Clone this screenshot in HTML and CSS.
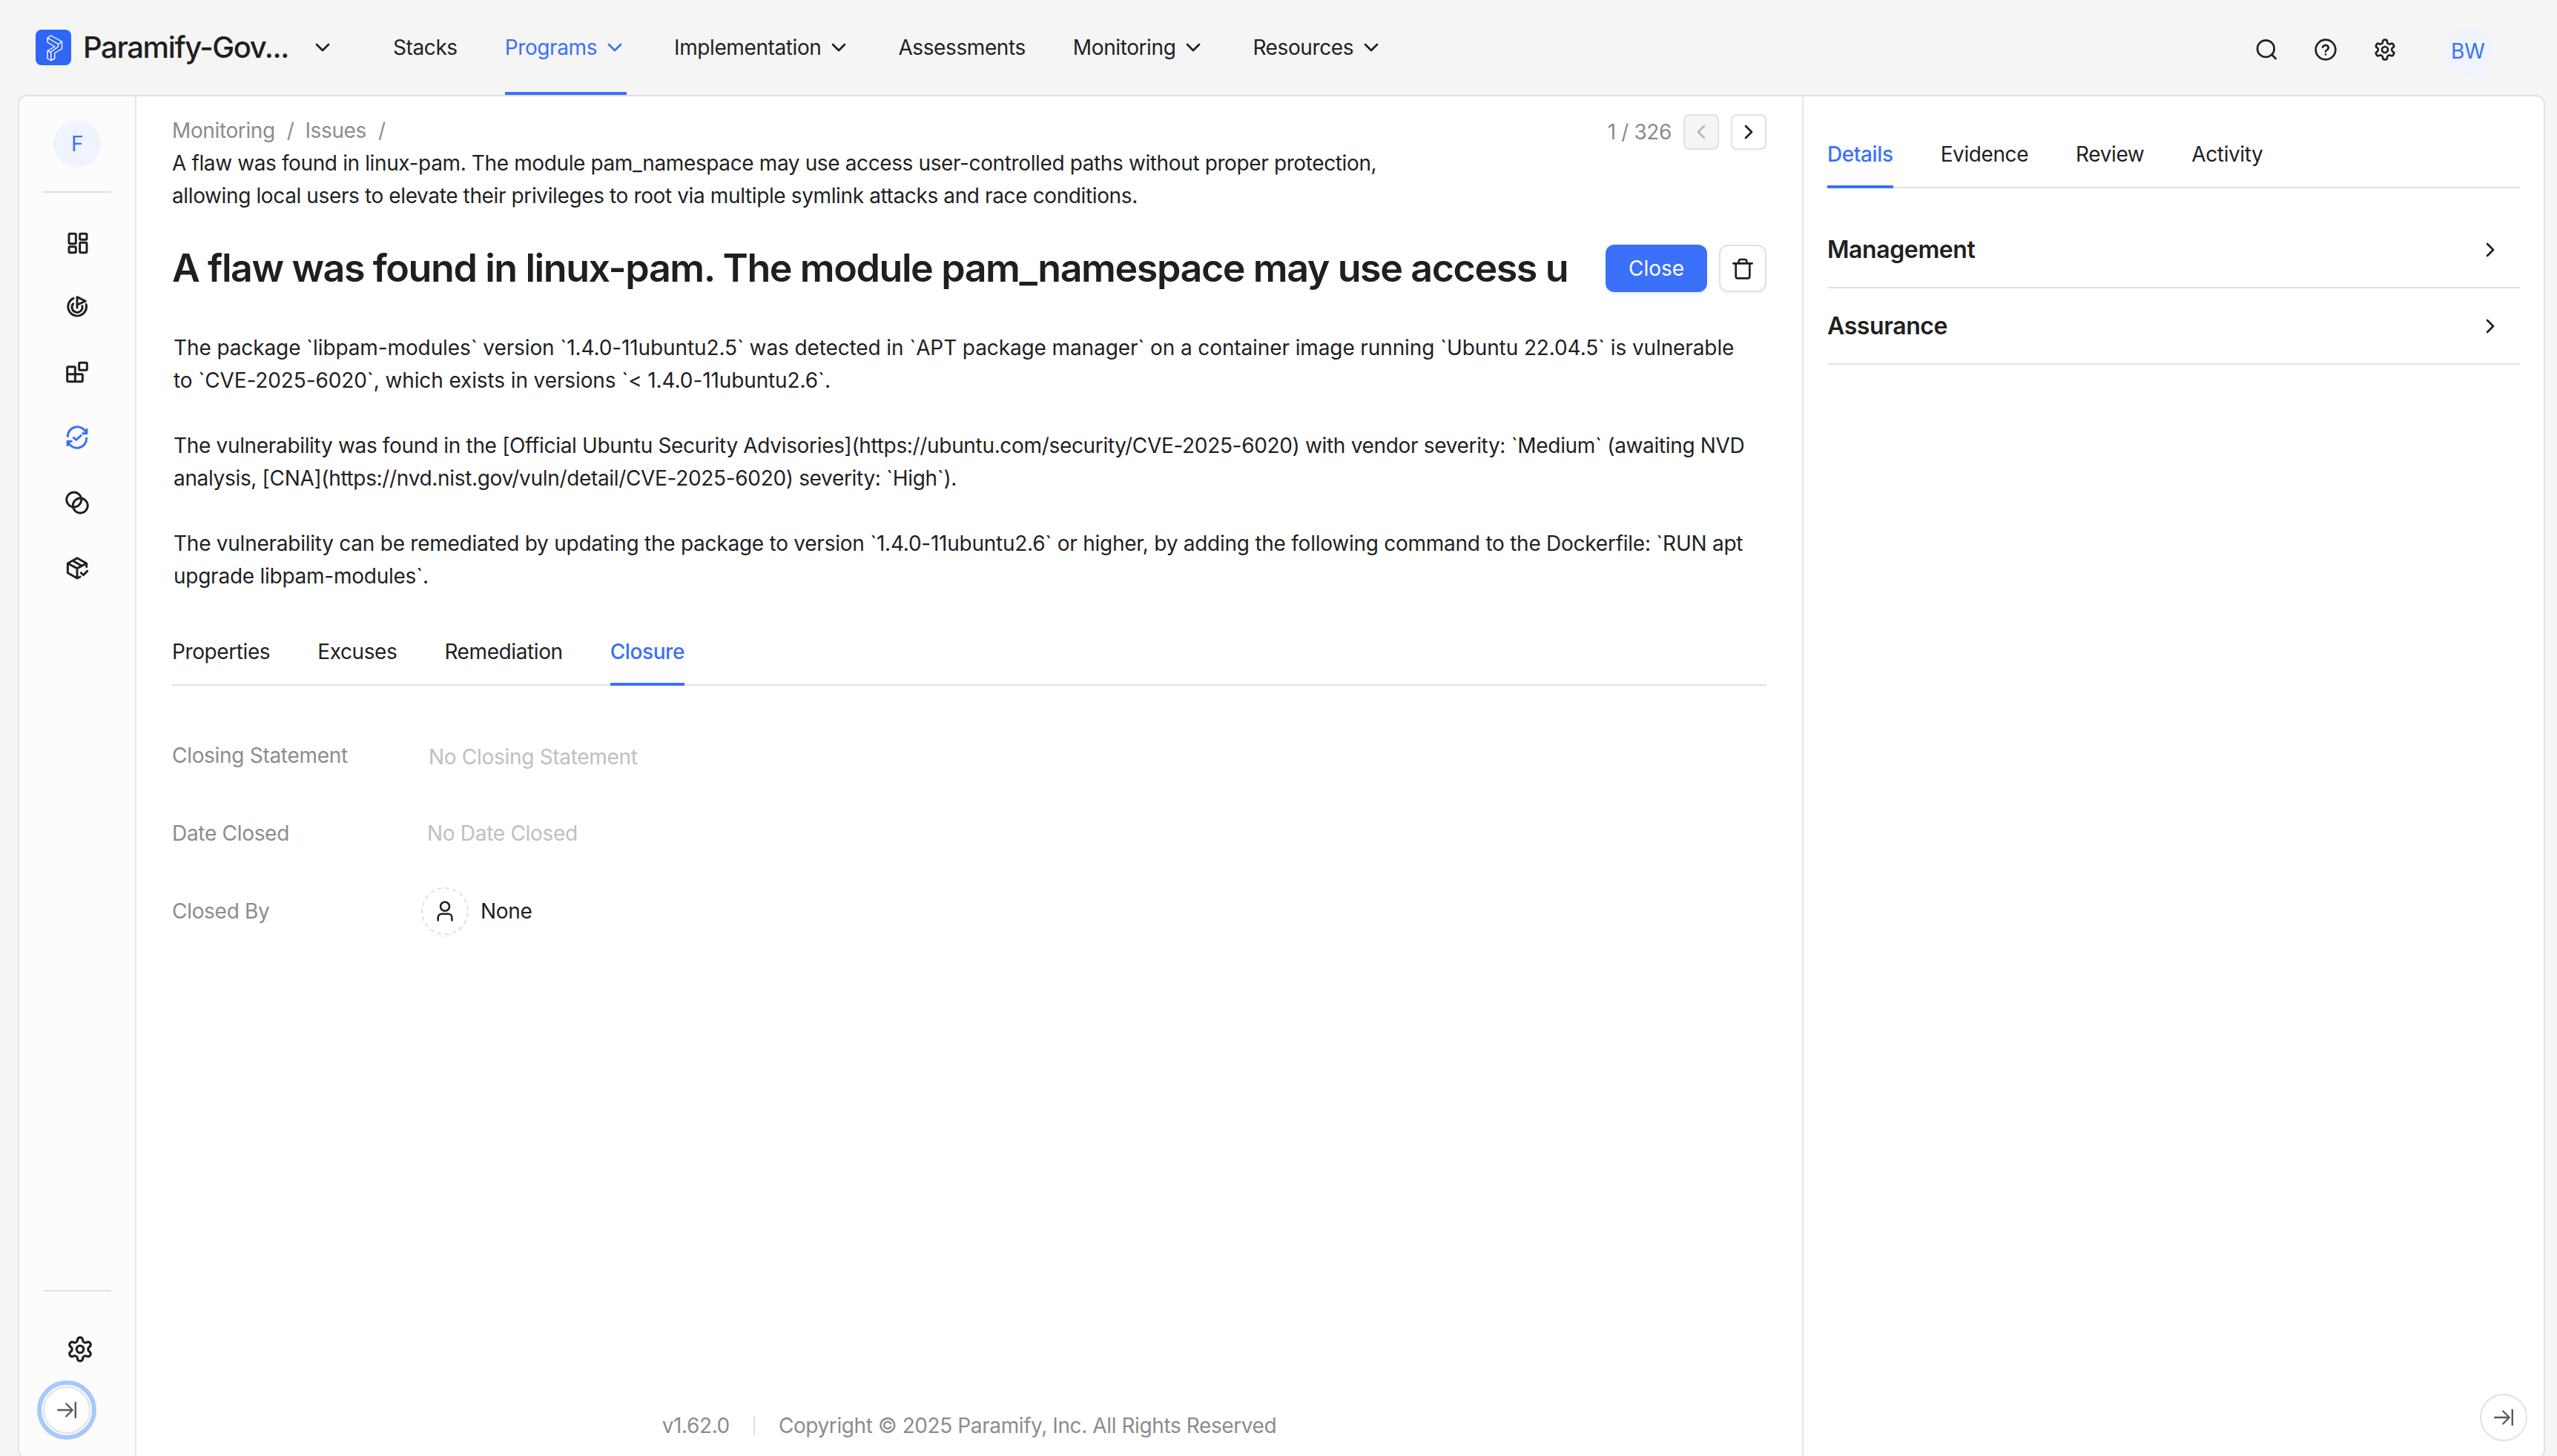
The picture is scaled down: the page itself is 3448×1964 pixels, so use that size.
FILE: index.html
```html
<!DOCTYPE html>
<html lang="en">
<head>
  <meta charset="utf-8">
  <title>Paramify</title>
  <link rel="stylesheet" href="styles.css">
</head>
<body>
  <!-- Shared icons -->
  <svg class="sprite">
    <symbol id="chevron" viewBox="0 0 24 24"><path d="M6 9l6 6 6-6"/></symbol>
    <symbol id="gear" viewBox="0 0 24 24">
      <path d="M12.22 2h-.44a2 2 0 0 0-2 2v.18a2 2 0 0 1-1 1.73l-.43.25a2 2 0 0 1-2 0l-.15-.08a2 2 0 0 0-2.73.73l-.22.38a2 2 0 0 0 .73 2.73l.15.1a2 2 0 0 1 1 1.72v.51a2 2 0 0 1-1 1.74l-.15.09a2 2 0 0 0-.73 2.73l.22.38a2 2 0 0 0 2.73.73l.15-.08a2 2 0 0 1 2 0l.43.25a2 2 0 0 1 1 1.73V20a2 2 0 0 0 2 2h.44a2 2 0 0 0 2-2v-.18a2 2 0 0 1 1-1.73l.43-.25a2 2 0 0 1 2 0l.15.08a2 2 0 0 0 2.73-.73l.22-.39a2 2 0 0 0-.73-2.73l-.15-.08a2 2 0 0 1-1-1.74v-.5a2 2 0 0 1 1-1.74l.15-.09a2 2 0 0 0 .73-2.73l-.22-.38a2 2 0 0 0-2.73-.73l-.15.08a2 2 0 0 1-2 0l-.43-.25a2 2 0 0 1-1-1.73V4a2 2 0 0 0-2-2z"/>
      <circle cx="12" cy="12" r="3"/>
    </symbol>
    <symbol id="expand" viewBox="0 0 26 26"><path d="M1.2 13H20M12.2 4.5l8.5 8.5-8.5 8.5M24.8 3v20"/></symbol>
  </svg>

  <header class="header">
    <div class="brand">
      <svg class="logo" viewBox="0 0 48 48">
        <path d="M20.7 8 16 11v6l10 6-10 5.500v10.500l4.700 2.500 5-2.500v-7.500l9.800-5.500V16zM16 11l14.500 8.500 5-3.500M30.500 19.500v3.500L20.700 30v11.500M16 28.500l4.700 2"/>
      </svg>
      <span class="brand-name">Paramify-Gov...</span>
      <svg class="icon"><use href="#chevron"/></svg>
    </div>
    <nav class="nav">
      <a class="nav-item">Stacks</a>
      <a class="nav-item active">Programs <svg class="icon"><use href="#chevron"/></svg></a>
      <a class="nav-item">Implementation <svg class="icon"><use href="#chevron"/></svg></a>
      <a class="nav-item">Assessments</a>
      <a class="nav-item">Monitoring <svg class="icon"><use href="#chevron"/></svg></a>
      <a class="nav-item">Resources <svg class="icon"><use href="#chevron"/></svg></a>
    </nav>
    <div class="tools">
      <svg class="icon" viewBox="0 0 24 24"><circle cx="11.500" cy="11" r="8.500"/><path d="M21.500 21l-4-4"/></svg>
      <svg class="icon" viewBox="0 0 24 24"><circle cx="12" cy="12" r="10"/><path d="M9.100 9.500a3 3 0 0 1 5.800.6c0 2-2.900 2.400-2.900 3.700M12 16.800v.1"/></svg>
      <svg class="icon"><use href="#gear"/></svg>
      <div class="avatar">BW</div>
    </div>
  </header>

  <div class="shell">
    <aside class="sidebar">
      <div class="avatar">F</div>
      <hr>
      <div class="side-nav">
        <svg class="icon dashboard" viewBox="0 0 24 24"><rect x="3" y="2.500" width="7" height="10" rx="1"/><rect x="14" y="2.500" width="7" height="6" rx="1"/><rect x="14" y="11.500" width="7" height="10" rx="1"/><rect x="3" y="15.500" width="7" height="6" rx="1"/></svg>
        <svg class="icon" viewBox="0 0 24 24"><path d="M8.300 3.300a9.300 9.300 0 1 0 12.800 6M8 8.800a5.300 5.300 0 1 0 9.200 2.200M12 13V2l8.500 4.200L12 9.800"/></svg>
        <svg class="icon" viewBox="0 0 24 24"><rect x="14" y="2.500" width="8" height="7.500" rx="1"/><path d="M10 21.500V7.500a1 1 0 0 0-1-1H3a1 1 0 0 0-1 1v13a1 1 0 0 0 1 1h13.500a1 1 0 0 0 1-1V15a1 1 0 0 0-1-1H2"/></svg>
        <svg class="icon current" viewBox="0 0 24 24"><path d="M2.500 11A9.600 9.600 0 0 1 21 7.300M21.700 4v4h-4M21.500 13A9.600 9.600 0 0 1 3 16.700M2.300 20v-4h4M8.500 12.300l2.500 2.200 4.800-4.300"/></svg>
        <svg class="icon" viewBox="0 0 24 24"><circle cx="8.800" cy="9" r="7.500"/><circle cx="15.200" cy="15" r="7.500"/></svg>
        <svg class="icon" viewBox="0 0 24 24"><path d="M21.500 11V7.500L12 2 2.500 7.500v9.500L12 22.500l3-1.500M2.500 7.500l9.500 5 9.500-5M12 12.500v10M7.500 4.700l9.300 5.300M16 17l2.300 2.300 4-4"/></svg>
      </div>
      <div class="side-bottom">
        <hr>
        <svg class="icon gear"><use href="#gear"/></svg>
        <button class="round focused"><svg class="icon"><use href="#expand"/></svg></button>
      </div>
    </aside>

    <main class="main">
      <div class="top-row">
        <div class="breadcrumb">
          <span class="crumb">Monitoring</span><span class="slash">/</span><span class="crumb">Issues</span><span class="slash">/</span>
          <div>A flaw was found in linux-pam. The module pam_namespace may use access user-controlled paths without proper protection, allowing local users to elevate their privileges to root via multiple symlink attacks and race conditions.</div>
        </div>
        <div class="pager">
          <span>1 / 326</span>
          <button class="small" disabled><svg class="icon prev"><use href="#chevron"/></svg></button>
          <button class="small"><svg class="icon next"><use href="#chevron"/></svg></button>
        </div>
      </div>

      <div class="title-row">
        <h1>A flaw was found in linux-pam. The module pam_namespace may use access u</h1>
        <button class="primary">Close</button>
        <button class="square"><svg class="icon" viewBox="0 0 24 24"><path d="M2.500 7h19M5 7v13a2 2 0 0 0 2 2h10a2 2 0 0 0 2-2V7M8 7V5a2 2 0 0 1 2-2h4a2 2 0 0 1 2 2v2"/></svg></button>
      </div>

      <div class="description">
        <p class="finding">The package `libpam-modules` version `1.4.0-11ubuntu2.5` was detected in `APT package manager` on a container image running `Ubuntu 22.04.5` is vulnerable to `CVE-2025-6020`, which exists in versions `&lt; 1.4.0-11ubuntu2.6`.</p>
        <p>The vulnerability was found in the [Official Ubuntu Security Advisories](https://ubuntu.com/security/CVE-2025-6020) with vendor severity: `Medium` (awaiting NVD analysis, [CNA](https://nvd.nist.gov/vuln/detail/CVE-2025-6020) severity: `High`).</p>
        <p class="remedy">The vulnerability can be remediated by updating the package to version `1.4.0-11ubuntu2.6` or higher, by adding the following command to the Dockerfile: `RUN apt upgrade libpam-modules`.</p>
      </div>

      <div class="tabs">
        <a class="tab">Properties</a>
        <a class="tab">Excuses</a>
        <a class="tab">Remediation</a>
        <a class="tab active">Closure</a>
      </div>

      <div class="fields">
        <div class="label">Closing Statement</div>
        <div class="value empty statement">No Closing Statement</div>
        <div class="label">Date Closed</div>
        <div class="value empty">No Date Closed</div>
        <div class="label">Closed By</div>
        <div class="value person">
          <span class="round dashed"><svg class="icon" viewBox="0 0 24 24"><circle cx="12" cy="7" r="4.800"/><path d="M4.500 22v-3a4 4 0 0 1 4-4h7a4 4 0 0 1 4 4v3"/></svg></span>
          None
        </div>
      </div>

      <footer class="footer">
        <span>v1.62.0</span>
        <span class="divider"></span>
        <span>Copyright © 2025 Paramify, Inc. All Rights Reserved</span>
      </footer>
    </main>

    <aside class="panel">
      <div class="tabs">
        <a class="tab active">Details</a>
        <a class="tab">Evidence</a>
        <a class="tab">Review</a>
        <a class="tab">Activity</a>
      </div>
      <div class="sections">
        <div class="section">Management <svg class="icon next"><use href="#chevron"/></svg></div>
        <div class="section">Assurance <svg class="icon next"><use href="#chevron"/></svg></div>
      </div>
      <button class="round"><svg class="icon"><use href="#expand"/></svg></button>
    </aside>
  </div>
</body>
</html>
```
FILE: styles.css
```css
* {
  box-sizing: border-box;
}

body {
  margin: 0;
  height: 1964px;
  overflow: hidden;
  background: #f5f5f5;
  color: #1f1f1f;
  font-family: Inter, "Liberation Sans", sans-serif;
  font-size: 28px;
  line-height: 44px;
  letter-spacing: -0.4px;
}

button {
  display: flex;
  align-items: center;
  justify-content: center;
  padding: 0;
  background: #fff;
  border: 2px solid #dee2e6;
  color: inherit;
  font: inherit;
}

hr {
  width: 92px;
  height: 2px;
  margin: 0;
  border: none;
  background: #e0e0e0;
}

.sprite {
  display: none;
}

.icon {
  width: 32px;
  height: 32px;
  flex: none;
  fill: none;
  stroke: currentColor;
  stroke-width: 2;
  stroke-linecap: round;
  stroke-linejoin: round;
}

.prev {
  transform: rotate(90deg);
}

.next {
  transform: rotate(-90deg);
}

.avatar {
  width: 64px;
  height: 64px;
  border-radius: 50%;
  background: #eff4ff;
  color: #3b70f8;
  line-height: 64px;
  text-align: center;
}

/* Header */
.header {
  display: flex;
  height: 128px;
  padding: 0 88px 0 48px;
}

.brand {
  display: flex;
  align-items: center;
  width: 482px;
}

.logo {
  width: 48px;
  height: 48px;
  border-radius: 8px;
  background: #2f66f6;
  fill: none;
  stroke: #fff;
  stroke-width: 1.4;
  stroke-linejoin: round;
}

.brand-name {
  width: 307px;
  margin-left: 16px;
  font-size: 40px;
  font-weight: 500;
  letter-spacing: -1.4px;
  white-space: nowrap;
}

.nav {
  display: flex;
  gap: 64px;
}

.nav-item {
  display: flex;
  align-items: center;
  gap: 8px;
  border-bottom: 4px solid transparent;
  padding-top: 4px;
}

.nav-item.active {
  color: #3b70f8;
  border-bottom-color: #3b70f8;
}

.tools {
  display: flex;
  align-items: center;
  gap: 48px;
  margin-left: auto;
  padding-top: 6px;
}

.tools .avatar {
  margin: 4px 0 0 16px;
  letter-spacing: 0;
}

/* Page frame */
.shell {
  display: flex;
  width: 3408px;
  height: 1840px;
  margin-left: 24px;
  background: #fff;
  border: 2px solid #dee2e6;
  border-radius: 12px;
  overflow: hidden;
}

.sidebar {
  display: flex;
  flex-direction: column;
  align-items: center;
  width: 158px;
  padding-top: 32px;
  background: #fcfcfc;
  border-right: 2px solid #e4e6eb;
}

.sidebar hr {
  margin-top: 32px;
}

.side-nav {
  display: flex;
  flex-direction: column;
  gap: 56px;
  margin-top: 50px;
  padding-left: 1px;
}

.side-nav .icon {
  stroke-width: 2.2;
}

.side-nav .dashboard {
  margin: 2px 0 -2px 1px;
}

.current {
  color: #3b70f8;
}

.side-bottom {
  display: flex;
  flex-direction: column;
  align-items: center;
  height: 258px;
  margin-top: auto;
}

.side-bottom .gear {
  width: 38px;
  height: 38px;
  margin: 59px 0 31px 8px;
}

/* Main column */
.main {
  display: flex;
  flex-direction: column;
  width: 2248px;
  padding: 24px 48px 21px;
  border-right: 2px solid #e4e6eb;
}

.top-row {
  display: flex;
  justify-content: space-between;
}

.breadcrumb {
  width: 1700px;
  letter-spacing: -0.38px;
}

.crumb, .slash {
  color: #8c8c8c;
}

.slash {
  margin: 0 15px 0 16px;
}

.pager {
  display: flex;
  gap: 16px;
  height: 48px;
  line-height: 48px;
  color: #8c8c8c;
}

.small {
  width: 48px;
  height: 48px;
  border-radius: 8px;
  box-shadow: 0 4px 0 rgba(0, 0, 0, 0.02);
  color: #1f1f1f;
}

.small:disabled {
  background: #f5f5f5;
  box-shadow: none;
  color: #b8b8b8;
}

.title-row {
  display: flex;
  gap: 16px;
  align-items: center;
  height: 64px;
  margin-top: 44px;
}

h1 {
  width: 1885px;
  margin: 0 32px 0 0;
  font-size: 52px;
  font-weight: 600;
  line-height: 66px;
  letter-spacing: -1.42px;
  white-space: nowrap;
}

.primary {
  width: 137px;
  height: 64px;
  border: none;
  border-radius: 12px;
  background: #3b70f8;
  box-shadow: 0 4px 0 rgba(5, 95, 255, 0.06);
  color: #fff;
}

.square {
  width: 64px;
  height: 64px;
  border-radius: 12px;
  box-shadow: 0 4px 0 rgba(0, 0, 0, 0.02);
}

.description {
  margin-top: 53px;
  padding: 0 20px 0 2px;
  letter-spacing: -0.33px;
}

.description p {
  margin: 0 0 44px;
}

.description .finding {
  letter-spacing: -0.11px;
}

.description .remedy {
  letter-spacing: -0.25px;
}

.tabs {
  display: flex;
  gap: 64px;
  height: 68px;
  border-bottom: 2px solid #dee2e6;
}

.tab {
  height: 68px;
}

.tab.active {
  border-bottom: 4px solid #3b70f8;
  color: #3b70f8;
  font-weight: 500;
}

.main .tabs {
  margin-top: 14px;
}

.fields {
  display: grid;
  grid-template-columns: 344px 1fr;
  grid-auto-rows: 64px;
  row-gap: 41px;
  align-items: center;
  margin-top: 62px;
  letter-spacing: -0.3px;
}

.label {
  color: #8c8c8c;
}

.empty {
  color: #bfbfbf;
}

.statement {
  padding: 4px 0 0 2px;
}

.person {
  display: flex;
  align-items: center;
  gap: 16px;
  margin-left: -8px;
}

.round {
  display: flex;
  align-items: center;
  justify-content: center;
  width: 64px;
  height: 64px;
  border: 2px solid #dee2e6;
  border-radius: 50%;
  background: #fff;
}

button.round {
  color: #595959;
}

button.round .icon {
  width: 26px;
  height: 26px;
  stroke-width: 2.4;
}

.focused {
  margin-right: 28px;
  outline: 6px solid #a6c8fc;
  outline-offset: 2px;
}

.dashed {
  border-style: dashed;
  box-shadow: 0 4px 0 rgba(0, 0, 0, 0.02);
}

.dashed .icon {
  width: 30px;
  height: 30px;
}

.footer {
  display: flex;
  align-items: center;
  justify-content: center;
  gap: 32px;
  margin-top: auto;
  color: #8c8c8c;
}

.divider {
  width: 2px;
  height: 26px;
  background: #dee2e6;
}

/* Right panel */
.panel {
  display: flex;
  flex: 1;
  flex-direction: column;
  padding: 56px 32px 22px;
}

.sections {
  margin-top: 32px;
}

.section {
  display: flex;
  align-items: center;
  justify-content: space-between;
  height: 103px;
  padding-right: 24px;
  border-bottom: 2px solid #e0e0e0;
  font-size: 32px;
  font-weight: 600;
}

.panel .round {
  margin: auto -10px 0 auto;
}
```
